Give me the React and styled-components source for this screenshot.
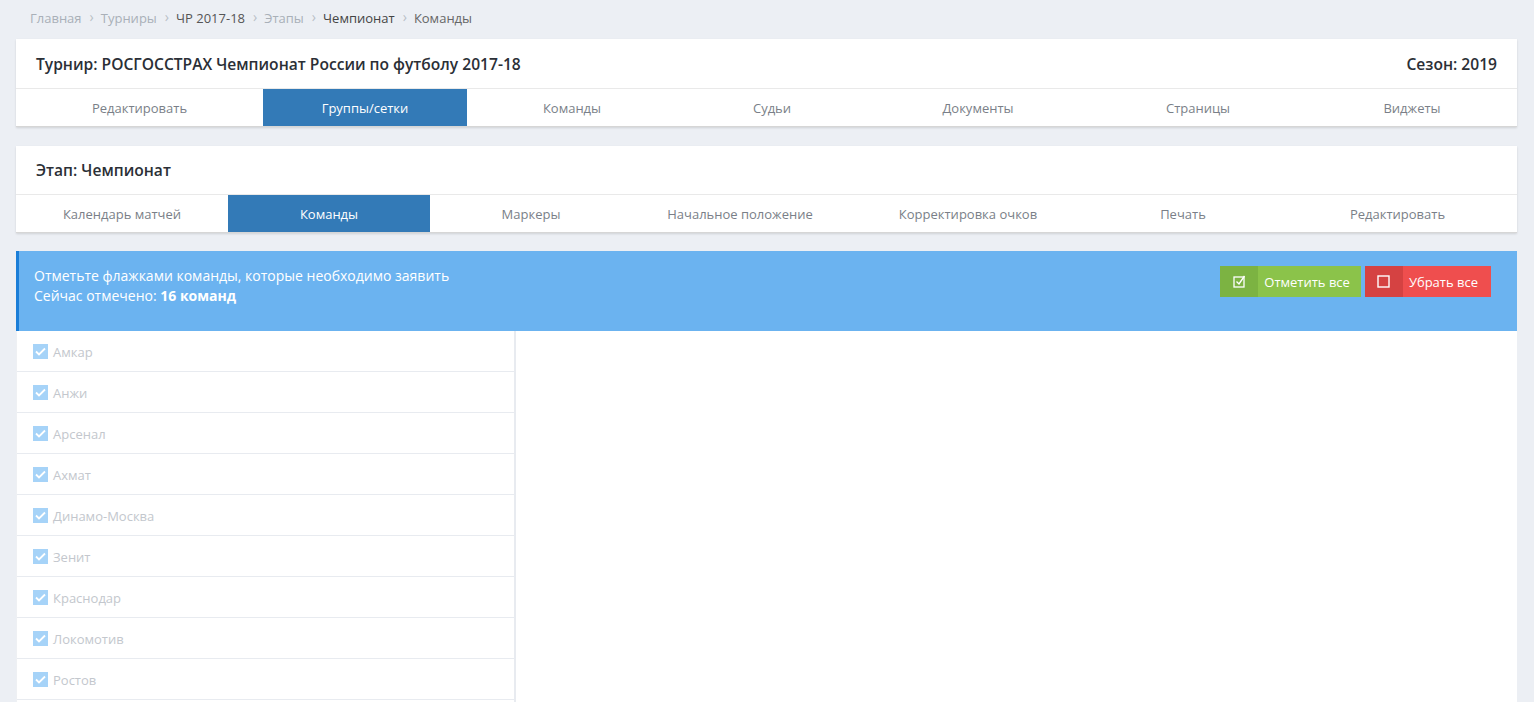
import React from "react";
import styled, { createGlobalStyle } from "styled-components";

const Global = createGlobalStyle`
  html, body { margin: 0; padding: 0; }
  body {
    background: #eceff4;
    font-family: "Open Sans", "Noto Sans", sans-serif;
    font-size: 13px;
    color: #333;
    width: 1534px;
    height: 702px;
    overflow: hidden;
  }
  * { box-sizing: border-box; }
`;

const Page = styled.div`
  padding: 0 17px 0 16px;
`;

const Crumbs = styled.div`
  display: flex;
  align-items: center;
  height: 39px;
  padding-left: 14px;
  padding-bottom: 4px;
  font-size: 13px;
`;

const Crumb = styled.span`
  color: ${(p) => p.$c || "#a9b0b8"};
`;

const Sep = styled.span`
  color: #b9bfc6;
  margin: 0 7px 0 8px;
  font-size: 14px;
  line-height: 1;
  position: relative;
  top: -1px;
`;

const Card = styled.div`
  background: #fff;
  box-shadow: 0 1px 2px rgba(0, 0, 0, 0.12);
  margin-bottom: ${(p) => p.$mb || 0}px;
`;

const CardHead = styled.div`
  display: flex;
  justify-content: space-between;
  align-items: center;
  height: ${(p) => p.$h}px;
  padding: 0 20px;
  font-size: 15.6px;
  font-weight: 600;
  color: #2b2f36;
`;

const Tabs = styled.div`
  display: grid;
  grid-template-columns: ${(p) => p.$cols};
  border-top: 1px solid #e9e9e9;
  border-bottom: 1px solid #d6d6d6;
`;

const Tab = styled.div`
  height: 37px;
  display: flex;
  align-items: center;
  justify-content: center;
  font-size: 13px;
  color: ${(p) => (p.$active ? "#fff" : "#7a7f88")};
  background: ${(p) => (p.$active ? "#337ab7" : "transparent")};
`;

const Alert = styled.div`
  display: flex;
  justify-content: space-between;
  align-items: flex-start;
  height: 80px;
  background: #6bb3f0;
  border-left: 3px solid #1a7ed8;
  padding: 15px 26px 0 15px;
  color: #fff;
  font-size: 14px;
  line-height: 20px;
`;

const Buttons = styled.div`
  display: flex;
  gap: 4px;
`;

const Btn = styled.div`
  display: flex;
  height: 31px;
  background: ${(p) => p.$bg};
  color: #fff;
  font-size: 13px;
`;

const BtnIcon = styled.div`
  width: ${(p) => p.$w}px;
  display: flex;
  align-items: center;
  justify-content: center;
  background: ${(p) => p.$bg};
`;

const BtnLabel = styled.div`
  display: flex;
  align-items: center;
  padding: 0 ${(p) => p.$pr}px 0 ${(p) => p.$pl}px;
`;

const Body = styled.div`
  background: #fff;
  height: 380px;
  display: flex;
`;

const List = styled.div`
  width: 500px;
  border-right: 2px solid #e8ebf0;
  border-left: 1px solid #eef0f3;
`;

const Row = styled.div`
  height: 41px;
  border-bottom: 1px solid #e8ebf0;
  display: flex;
  align-items: center;
  padding-left: 16px;
  padding-top: 1px;
  font-size: 13px;
  color: #c3c7cd;
`;

const Check = styled.span`
  width: 15px;
  height: 15px;
  background: #a6d3f8;
  display: inline-flex;
  align-items: center;
  justify-content: center;
  margin-right: 5px;
`;

const teams = [
  "Амкар",
  "Анжи",
  "Арсенал",
  "Ахмат",
  "Динамо-Москва",
  "Зенит",
  "Краснодар",
  "Локомотив",
  "Ростов",
];

const tabs1 = ["Редактировать", "Группы/сетки", "Команды", "Судьи", "Документы", "Страницы", "Виджеты"];
const tabs2 = ["Календарь матчей", "Команды", "Маркеры", "Начальное положение", "Корректировка очков", "Печать", "Редактировать"];

export default function App() {
  return (
    <>
      <Global />
      <Page>
        <Crumbs>
          <Crumb>Главная</Crumb>
          <Sep>›</Sep>
          <Crumb>Турниры</Crumb>
          <Sep>›</Sep>
          <Crumb $c="#555">ЧР 2017-18</Crumb>
          <Sep>›</Sep>
          <Crumb>Этапы</Crumb>
          <Sep>›</Sep>
          <Crumb $c="#444">Чемпионат</Crumb>
          <Sep>›</Sep>
          <Crumb $c="#666">Команды</Crumb>
        </Crumbs>

        <Card $mb={19}>
          <CardHead $h={49}>
            <span>Турнир: РОСГОССТРАХ Чемпионат России по футболу 2017-18</span>
            <span>Сезон: 2019</span>
          </CardHead>
          <Tabs $cols="247px 204px 210px 190px 222px 218px 210px">
            {tabs1.map((t, i) => (
              <Tab key={t} $active={i === 1}>{t}</Tab>
            ))}
          </Tabs>
        </Card>

        <Card $mb={18}>
          <CardHead $h={48}>
            <span>Этап: Чемпионат</span>
          </CardHead>
          <Tabs $cols="212px 202px 202px 216px 240px 190px 239px">
            {tabs2.map((t, i) => (
              <Tab key={t} $active={i === 1}>{t}</Tab>
            ))}
          </Tabs>
        </Card>

        <Alert>
          <div>
            <div>Отметьте флажками команды, которые необходимо заявить</div>
            <div>
              Сейчас отмечено: <b>16 команд</b>
            </div>
          </div>
          <Buttons>
            <Btn $bg="#8bc34a">
              <BtnIcon $w={38} $bg="#7cb342">
                <svg width="13" height="13" viewBox="0 0 13 13">
                  <rect x="1" y="2" width="10" height="10" fill="none" stroke="#fff" strokeWidth="1.3" />
                  <path d="M3.5 6.5 L6 9 L11.5 1" fill="none" stroke="#fff" strokeWidth="1.4" />
                </svg>
              </BtnIcon>
              <BtnLabel $pl={6} $pr={11}>Отметить все</BtnLabel>
            </Btn>
            <Btn $bg="#ef4e4e">
              <BtnIcon $w={38} $bg="#d54242">
                <svg width="13" height="13" viewBox="0 0 13 13">
                  <rect x="1" y="1" width="11" height="11" fill="none" stroke="#fff" strokeWidth="1.4" />
                </svg>
              </BtnIcon>
              <BtnLabel $pl={6} $pr={13}>Убрать все</BtnLabel>
            </Btn>
          </Buttons>
        </Alert>

        <Body>
          <List>
            {teams.map((t) => (
              <Row key={t}>
                <Check>
                  <svg width="11" height="9" viewBox="0 0 11 9">
                    <path d="M1 4.5 L4 7.5 L10 1.5" fill="none" stroke="#fff" strokeWidth="1.8" />
                  </svg>
                </Check>
                {t}
              </Row>
            ))}
          </List>
        </Body>
      </Page>
    </>
  );
}
